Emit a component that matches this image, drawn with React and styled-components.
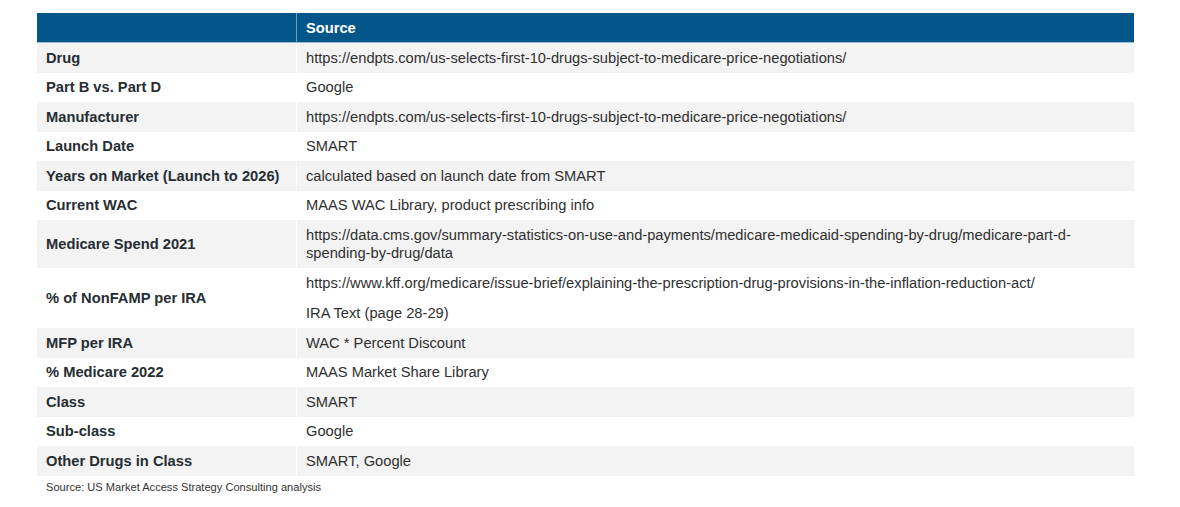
import React from "react";
import styled, { createGlobalStyle } from "styled-components";

const GlobalStyle = createGlobalStyle`
  body {
    margin: 0;
    background: #ffffff;
    font-family: "Liberation Sans", Arial, sans-serif;
  }
`;

const Page = styled.div`
  width: 1180px;
  height: 507px;
  padding: 13px 0 0 37px;
  box-sizing: border-box;
`;

const Table = styled.div`
  display: grid;
  grid-template-columns: 259px 838px;
  width: 1097px;
`;

const HeadCell = styled.div`
  height: 30px;
  background: #02568a;
  color: #ffffff;
  font-weight: 700;
  font-size: 14.7px;
  display: flex;
  align-items: center;
  padding-left: 9px;
  border-left: ${(p) => (p.$second ? "1px solid #6d9cc2" : "none")};
  border-bottom: 1px solid #9bbcd6;
  box-sizing: border-box;
`;

const Cell = styled.div`
  height: ${(p) => p.$h}px;
  background: ${(p) => (p.$shaded ? "#f3f3f3" : "#ffffff")};
  border-left: ${(p) => (p.$second ? "1px solid #ffffff" : "none")};
  box-sizing: border-box;
  padding: 0 9px;
  display: flex;
  flex-direction: column;
  justify-content: center;
  font-size: 14.7px;
  line-height: 18px;
  color: ${(p) => (p.$label ? "#262d33" : "#2f2f2f")};
  font-weight: ${(p) => (p.$label ? 700 : 400)};
`;

const SubLine = styled.div`
  height: 30px;
  display: flex;
  align-items: center;
`;

const Note = styled.div`
  font-size: 11.1px;
  color: #333333;
  padding: 5px 0 0 9px;
`;

const rows = [
  { label: "Drug", value: "https://endpts.com/us-selects-first-10-drugs-subject-to-medicare-price-negotiations/" },
  { label: "Part B vs. Part D", value: "Google" },
  { label: "Manufacturer", value: "https://endpts.com/us-selects-first-10-drugs-subject-to-medicare-price-negotiations/" },
  { label: "Launch Date", value: "SMART" },
  { label: "Years on Market (Launch to 2026)", value: "calculated based on launch date from SMART" },
  { label: "Current WAC", value: "MAAS WAC Library, product prescribing info" },
  {
    label: "Medicare Spend 2021",
    value: "https://data.cms.gov/summary-statistics-on-use-and-payments/medicare-medicaid-spending-by-drug/medicare-part-d-spending-by-drug/data",
    h: 48,
  },
  {
    label: "% of NonFAMP per IRA",
    lines: [
      "https://www.kff.org/medicare/issue-brief/explaining-the-prescription-drug-provisions-in-the-inflation-reduction-act/",
      "IRA Text (page 28-29)",
    ],
    h: 60,
  },
  { label: "MFP per IRA", value: "WAC * Percent Discount" },
  { label: "% Medicare 2022", value: "MAAS Market Share Library" },
  { label: "Class", value: "SMART" },
  { label: "Sub-class", value: "Google" },
  { label: "Other Drugs in Class", value: "SMART, Google" },
];

export default function App() {
  return (
    <>
      <GlobalStyle />
      <Page>
        <Table>
          <HeadCell />
          <HeadCell $second>Source</HeadCell>
          {rows.map((row, i) => {
            const shaded = i % 2 === 0;
            const h = row.h || 29.5;
            return (
              <React.Fragment key={row.label}>
                <Cell $label $shaded={shaded} $h={h}>
                  {row.label}
                </Cell>
                <Cell $second $shaded={shaded} $h={h}>
                  {row.lines
                    ? row.lines.map((line) => <SubLine key={line}>{line}</SubLine>)
                    : row.value}
                </Cell>
              </React.Fragment>
            );
          })}
        </Table>
        <Note>Source: US Market Access Strategy Consulting analysis</Note>
      </Page>
    </>
  );
}
